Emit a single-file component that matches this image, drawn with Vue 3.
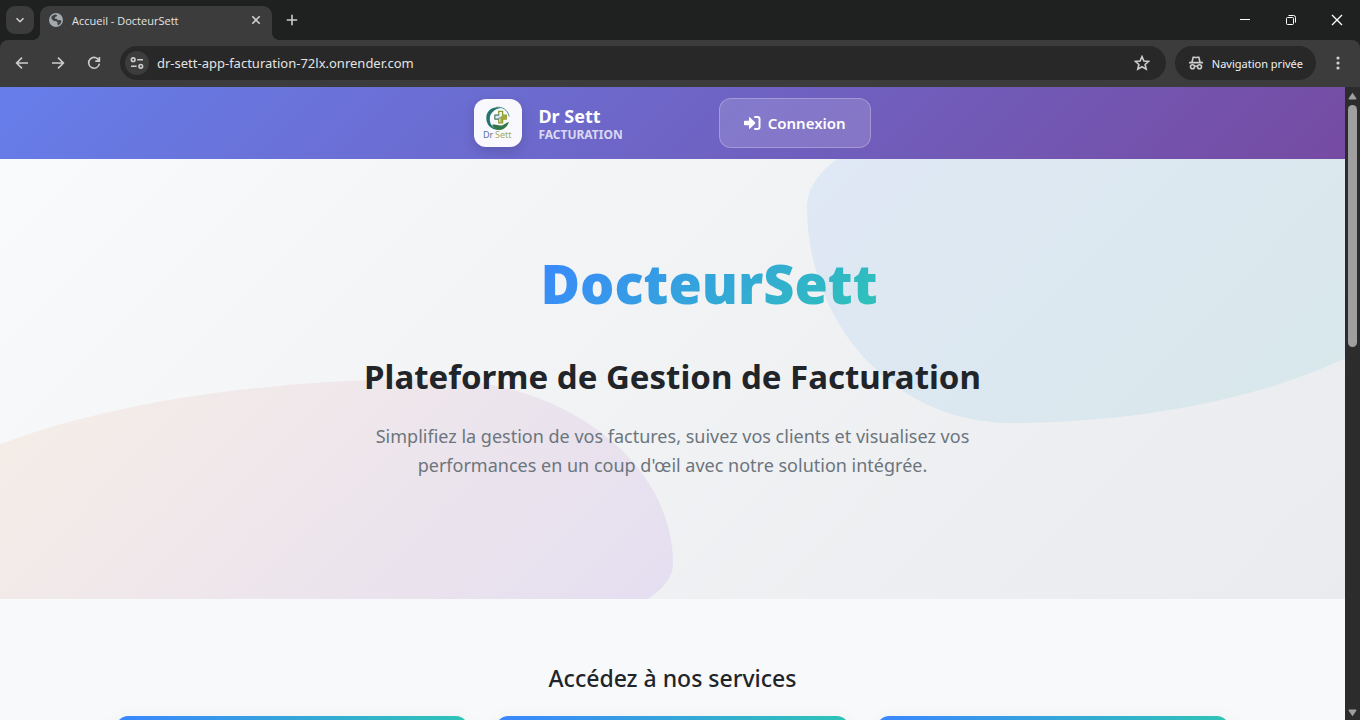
<script setup>
import { ref } from 'vue'

const address = ref('dr-sett-app-facturation-72lx.onrender.com')
const services = ['Factures', 'Clients', 'Statistiques']
</script>

<template>
  <div class="browser">
    <div class="tabstrip">
      <button class="tab-search" type="button" aria-label="Rechercher dans les onglets">
        <svg width="10" height="10" viewBox="0 0 10 10"><path d="M1.500 3.200 5 6.700l3.500-3.500" class="line" /></svg>
      </button>
      <div class="tab">
        <svg class="globe" width="14" height="14" viewBox="0 0 14 14">
          <circle cx="7" cy="7" r="7" fill="#a4a9ae" />
          <path d="M2.200 4.600C3 2.700 4.500 1.700 6.800 1.500L8.300 2.400 7.400 3.600 6 4 5.800 5.500 8 6 9 7.300 11.500 7 12.400 8.200C12 10.300 10.600 11.700 9 12.300L8.300 10.800 8.700 9.200 7 8.300 4.500 7.800 3 6.500Z" fill="#3f4245" />
        </svg>
        <span class="tab-title">Accueil - DocteurSett</span>
        <button class="plain close" type="button" aria-label="Fermer l'onglet">
          <svg width="10" height="10" viewBox="0 0 10 10"><path d="M1.300 1.300 8.700 8.700M8.700 1.300 1.300 8.700" class="line" /></svg>
        </button>
      </div>
      <button class="plain new-tab" type="button" aria-label="Nouvel onglet">
        <svg width="12" height="12" viewBox="0 0 12 12"><path d="M6 .8V11.200M.8 6H11.200" class="line" /></svg>
      </button>
      <div class="window-controls">
        <button class="plain" type="button" aria-label="Réduire">
          <svg width="12" height="12" viewBox="0 0 12 12"><path d="M1 5.500H11" class="thin" /></svg>
        </button>
        <button class="plain" type="button" aria-label="Restaurer">
          <svg width="12" height="12" viewBox="0 0 12 12"><rect x="1.500" y="3.500" width="7" height="7" rx="1" class="thin" /><path d="M3.500 1.500H8.500Q10.500 1.500 10.500 3.500V8.500" class="thin" /></svg>
        </button>
        <button class="plain" type="button" aria-label="Fermer">
          <svg width="12" height="12" viewBox="0 0 12 12"><path d="M1 1 11 11M11 1 1 11" class="thin close-line" /></svg>
        </button>
      </div>
    </div>

    <div class="toolbar">
      <button class="plain nav" type="button" aria-label="Précédent">
        <svg width="14" height="14" viewBox="0 0 14 14"><path d="M13 7H1.800M7 1.600 1.600 7 7 12.400" class="line" /></svg>
      </button>
      <button class="plain nav" type="button" aria-label="Suivant">
        <svg width="14" height="14" viewBox="0 0 14 14"><path d="M1 7H12.200M7 1.600 12.400 7 7 12.400" class="line" /></svg>
      </button>
      <button class="plain nav" type="button" aria-label="Actualiser">
        <svg width="14" height="14" viewBox="0 0 14 14"><path d="M12 4.600A5.400 5.400 0 1 0 12.400 7.600M12.400 1V5.100H8.300" class="line" /></svg>
      </button>
      <div class="omnibox">
        <button class="site-info" type="button" aria-label="Informations sur le site">
          <svg width="14" height="12" viewBox="0 0 14 12"><circle cx="3.200" cy="2.700" r="1.800" class="line" /><path d="M7.200 2.700H13M1 9.300H6.600" class="line" /><circle cx="10.800" cy="9.300" r="1.800" class="line" /></svg>
        </button>
        <input v-model="address" class="address" type="text" aria-label="Adresse" spellcheck="false" />
        <button class="plain star" type="button" aria-label="Ajouter aux favoris">
          <svg width="16" height="16" viewBox="0 0 16 16"><path d="M8 1.600 9.900 6 14.700 6.400 11.100 9.500 12.200 14.200 8 11.700 3.800 14.200 4.900 9.500 1.300 6.400 6.100 6Z" class="line" /></svg>
        </button>
      </div>
      <button class="private" type="button">
        <svg width="16" height="14" viewBox="0 0 16 14">
          <path d="M4 6 5.200 1.200H6.600L8 1.700 9.400 1.200H10.800L12 6M1 6.600H15" class="line" />
          <circle cx="4.500" cy="10.700" r="2" class="line" /><circle cx="11.500" cy="10.700" r="2" class="line" /><path d="M6.500 10.400Q8 9.500 9.500 10.400" class="line" />
        </svg>
        <span>Navigation privée</span>
      </button>
      <button class="plain menu" type="button" aria-label="Menu">
        <svg width="4" height="14" viewBox="0 0 4 14" fill="#d0d0d0"><circle cx="2" cy="2" r="1.600" /><circle cx="2" cy="7" r="1.600" /><circle cx="2" cy="12" r="1.600" /></svg>
      </button>
    </div>

    <div class="viewport">
      <div class="page">
        <header class="site-header">
          <a class="brand" href="#">
            <span class="logo">
              <svg width="32" height="36" viewBox="0 0 32 36">
                <path d="M20 3C12 .5 4.500 5 4.300 12.500 4 21 11 26 18.500 24.500 12 24.500 7.500 20 7.800 13.500 8 8 12.500 3.500 20 3Z" fill="#23746f" />
                <path d="M14 2.400C20 1.200 26 5 27.200 11.500" fill="none" stroke="#538d85" stroke-width="1" />
                <path d="M10 20C13.500 18.500 16 21.300 20 20.400 23 19.500 24.500 17.200 27 17.200 25 21.600 22.500 24.500 17.500 25 14 25 11.500 23 10 20Z" fill="#327646" />
                <path d="M16.700 6.300H20.600V10.200H24.300V14H20.600V17.800H16.700V14H12.900V10.200H16.700Z" fill="#eef5e9" stroke="#8b9e36" stroke-width="1.300" />
                <path d="M17 10.200H12.900V14H16.500L18.500 12" fill="#dcebf1" stroke="#427b9d" stroke-width="1" />
                <path d="M20.600 10.200H24.300V14H20.600V17.800H18.400V12Z" fill="#a4a638" />
                <text x="1" y="33" font-size="9" fill="#55719e">Dr</text>
                <text x="13" y="33" font-size="9" fill="#9bab66">Sett</text>
              </svg>
            </span>
            <span class="brand-text"><strong>Dr Sett</strong><small>FACTURATION</small></span>
          </a>
          <a class="login" href="#">
            <svg width="17" height="16" viewBox="0 0 17 16">
              <path d="M.8 5.800H5V2.900Q5 1.500 6.100 2.400L11 7.200Q11.700 8 11 8.800L6.100 13.600Q5 14.500 5 13.100V10.200H.8Q0 10.200 0 9.400V6.600Q0 5.800 .8 5.800Z" fill="#fff" />
              <path d="M11 2H13.600Q15.500 2 15.500 4V12Q15.500 14 13.600 14H11" fill="none" stroke="#fff" stroke-width="2" stroke-linecap="round" />
            </svg>
            <span>Connexion</span>
          </a>
        </header>

        <section class="hero">
          <h1><span>DocteurSett</span></h1>
          <h2>Plateforme de Gestion de Facturation</h2>
          <p>Simplifiez la gestion de vos factures, suivez vos clients et visualisez vos performances en un coup d'œil avec notre solution intégrée.</p>
        </section>

        <section class="services">
          <h2>Accédez à nos services</h2>
          <div class="cards">
            <article v-for="service in services" :key="service" class="card"></article>
          </div>
        </section>
      </div>

      <div class="scrollbar">
        <svg width="9" height="8" viewBox="0 0 9 8"><path d="M4.500 .8 8.500 6.500Q8.500 7.500 7.500 7.500H1.500Q.5 7.500 .5 6.500Z" fill="#9f9f9f" /></svg>
        <div class="track"><div class="thumb"></div></div>
        <svg width="9" height="8" viewBox="0 0 9 8"><path d="M4.500 7.200 8.500 1.500Q8.500 .5 7.500 .5H1.500Q.5 .5 .5 1.500Z" fill="#9f9f9f" /></svg>
      </div>
    </div>
  </div>
</template>

<style>
body {
  margin: 0;
  overflow: hidden;
}
</style>

<style scoped>
* {
  box-sizing: border-box;
}

.browser {
  --accent: linear-gradient(135deg, #3a86ff, #2ec4b6);
  display: flex;
  flex-direction: column;
  height: 100vh;
  background: #1f2120;
  color: #e3e3e3;
  font-family: "Noto Sans", "Open Sans", sans-serif;
}

h1,
h2,
p {
  margin: 0;
}

a {
  color: inherit;
  text-decoration: none;
}

button {
  padding: 0;
  border: 0;
  color: inherit;
  font: inherit;
}

svg {
  display: block;
  flex: none;
}

.line {
  fill: none;
  stroke: #cdcdcd;
  stroke-width: 1.6;
}

.thin {
  fill: none;
  stroke: #fff;
  stroke-width: 1;
}

.close-line {
  stroke-width: 1.3;
}

.plain {
  display: grid;
  place-items: center;
  background: none;
}

.tabstrip {
  display: flex;
  flex: none;
  height: 40px;
  padding-left: 6px;
}

.tab-search {
  display: grid;
  place-items: center;
  width: 28px;
  height: 28px;
  margin: 6px 6px 0 0;
  border-radius: 9px;
  background: #3c3c3c;
}

.tab {
  position: relative;
  display: flex;
  align-items: center;
  width: 232px;
  height: 34px;
  margin-top: 6px;
  padding: 0 9px 6px;
  border-radius: 9px 9px 0 0;
  background: #3c3c3c;
}

.tab::before,
.tab::after {
  position: absolute;
  bottom: 0;
  width: 8px;
  height: 8px;
  content: "";
}

.tab::before {
  right: 100%;
  background: radial-gradient(circle at 0 0, transparent 8px, #3c3c3c 8px);
}

.tab::after {
  left: 100%;
  background: radial-gradient(circle at 100% 0, transparent 8px, #3c3c3c 8px);
}

.tab-title {
  flex: 1;
  margin-left: 9px;
  font-family: "Open Sans", sans-serif;
  font-size: 11px;
}

.close {
  width: 14px;
  height: 14px;
}

.new-tab {
  width: 40px;
}

.window-controls {
  display: flex;
  margin-left: auto;
}

.window-controls button {
  width: 46px;
}

.toolbar {
  display: flex;
  flex: none;
  align-items: center;
  height: 47px;
  padding: 0 12px 1px 4px;
  border-radius: 8px 8px 0 0;
  background: #3c3c3c;
}

.nav {
  width: 36px;
  height: 34px;
}

.omnibox {
  display: flex;
  flex: 1;
  align-items: center;
  height: 34px;
  margin: 0 9px 0 8px;
  padding: 0 16px 0 5px;
  border-radius: 17px;
  background: #282828;
}

.site-info {
  display: grid;
  place-items: center;
  width: 24px;
  height: 24px;
  border-radius: 50%;
  background: #3c3c3c;
}

.address {
  flex: 1;
  min-width: 0;
  margin-left: 8px;
  padding: 0;
  border: 0;
  outline: 0;
  background: none;
  color: #e3e3e3;
  font: 13px "Noto Sans", sans-serif;
}

.private {
  display: flex;
  align-items: center;
  gap: 8px;
  height: 34px;
  margin-right: 12px;
  padding: 0 13px;
  border-radius: 17px;
  background: #282828;
  color: #f1f1f1;
  font-size: 11px;
}

.menu {
  width: 20px;
  height: 34px;
}

.viewport {
  display: flex;
  flex: 1;
  min-height: 0;
}

.page {
  flex: 1;
  min-width: 0;
  overflow: hidden;
  background: #f8f9fb;
  color: #212529;
}

.site-header {
  display: flex;
  justify-content: center;
  align-items: center;
  gap: 96px;
  padding: 11px 0;
  background: linear-gradient(135deg, #667eea, #764ba2);
  color: #fff;
}

.brand {
  display: flex;
  align-items: center;
  gap: 16px;
}

.logo {
  display: grid;
  place-items: center;
  width: 48px;
  height: 48px;
  border-radius: 12px;
  background: #f9f9fd;
  box-shadow: 0 4px 12px rgba(0, 0, 0, 0.15);
}

.brand-text {
  display: flex;
  flex-direction: column;
}

.brand-text strong {
  font-size: 18px;
  line-height: 24px;
}

.brand-text small {
  color: rgba(255, 255, 255, 0.75);
  font-size: 12px;
  font-weight: 700;
  line-height: 14px;
}

.login {
  display: flex;
  align-items: center;
  gap: 7px;
  height: 50px;
  padding: 0 24px;
  border: 1px solid rgba(255, 255, 255, 0.25);
  border-radius: 12px;
  background: rgba(255, 255, 255, 0.15);
  font-size: 15px;
  font-weight: 600;
}

.hero {
  position: relative;
  overflow: hidden;
  padding: 88px 24px 119px;
  background: linear-gradient(135deg, #f8fafc, #f1f2f4 50%, #e9ebee);
  text-align: center;
}

.hero::before,
.hero::after {
  position: absolute;
  opacity: 0.1;
  content: "";
}

.hero::before {
  top: -10%;
  right: -10%;
  width: 50%;
  height: 70%;
  border-radius: 30% 70% 70% 30% / 30% 30% 70% 70%;
  background: var(--accent);
}

.hero::after {
  bottom: -10%;
  left: -10%;
  width: 60%;
  height: 60%;
  border-radius: 70% 30% 30% 70% / 70% 70% 30% 30%;
  background: linear-gradient(135deg, #ff9f1c, #8338ec);
}

.hero > * {
  position: relative;
  z-index: 1;
}

.hero h1 {
  padding-left: 73px;
  font-family: "Open Sans", "Noto Sans", sans-serif;
  font-size: 54px;
  font-weight: 800;
  line-height: 72px;
}

.hero h1 span {
  display: inline-block;
  background: var(--accent);
  background-clip: text;
  color: transparent;
}

.hero h2 {
  margin-top: 36px;
  font-size: 33px;
  font-weight: 700;
  line-height: 44px;
}

.hero p {
  max-width: 640px;
  margin: 23px auto 0;
  color: #6c757d;
  font-size: 18px;
  line-height: 29px;
}

.services {
  padding: 64px 24px;
}

.services h2 {
  font-size: 23px;
  font-weight: 500;
  line-height: 30px;
  text-align: center;
}

.cards {
  display: grid;
  grid-template-columns: repeat(3, 1fr);
  gap: 28px;
  max-width: 1114px;
  margin: 23px auto 0;
}

.card {
  overflow: hidden;
  min-height: 280px;
  border-radius: 12px;
  background: #fff;
  box-shadow: 0 8px 24px rgba(0, 0, 0, 0.08);
}

.card::before {
  display: block;
  height: 8px;
  background: linear-gradient(90deg, #3a86ff, #2ec4b6);
  content: "";
}

.scrollbar {
  display: flex;
  flex: none;
  flex-direction: column;
  align-items: center;
  width: 15px;
  padding: 5px 0 3px;
  background: #2c2c2c;
}

.track {
  flex: 1;
  width: 9px;
  padding-top: 5px;
}

.thumb {
  height: 40%;
  border-radius: 5px;
  background: #9f9f9f;
}
</style>
